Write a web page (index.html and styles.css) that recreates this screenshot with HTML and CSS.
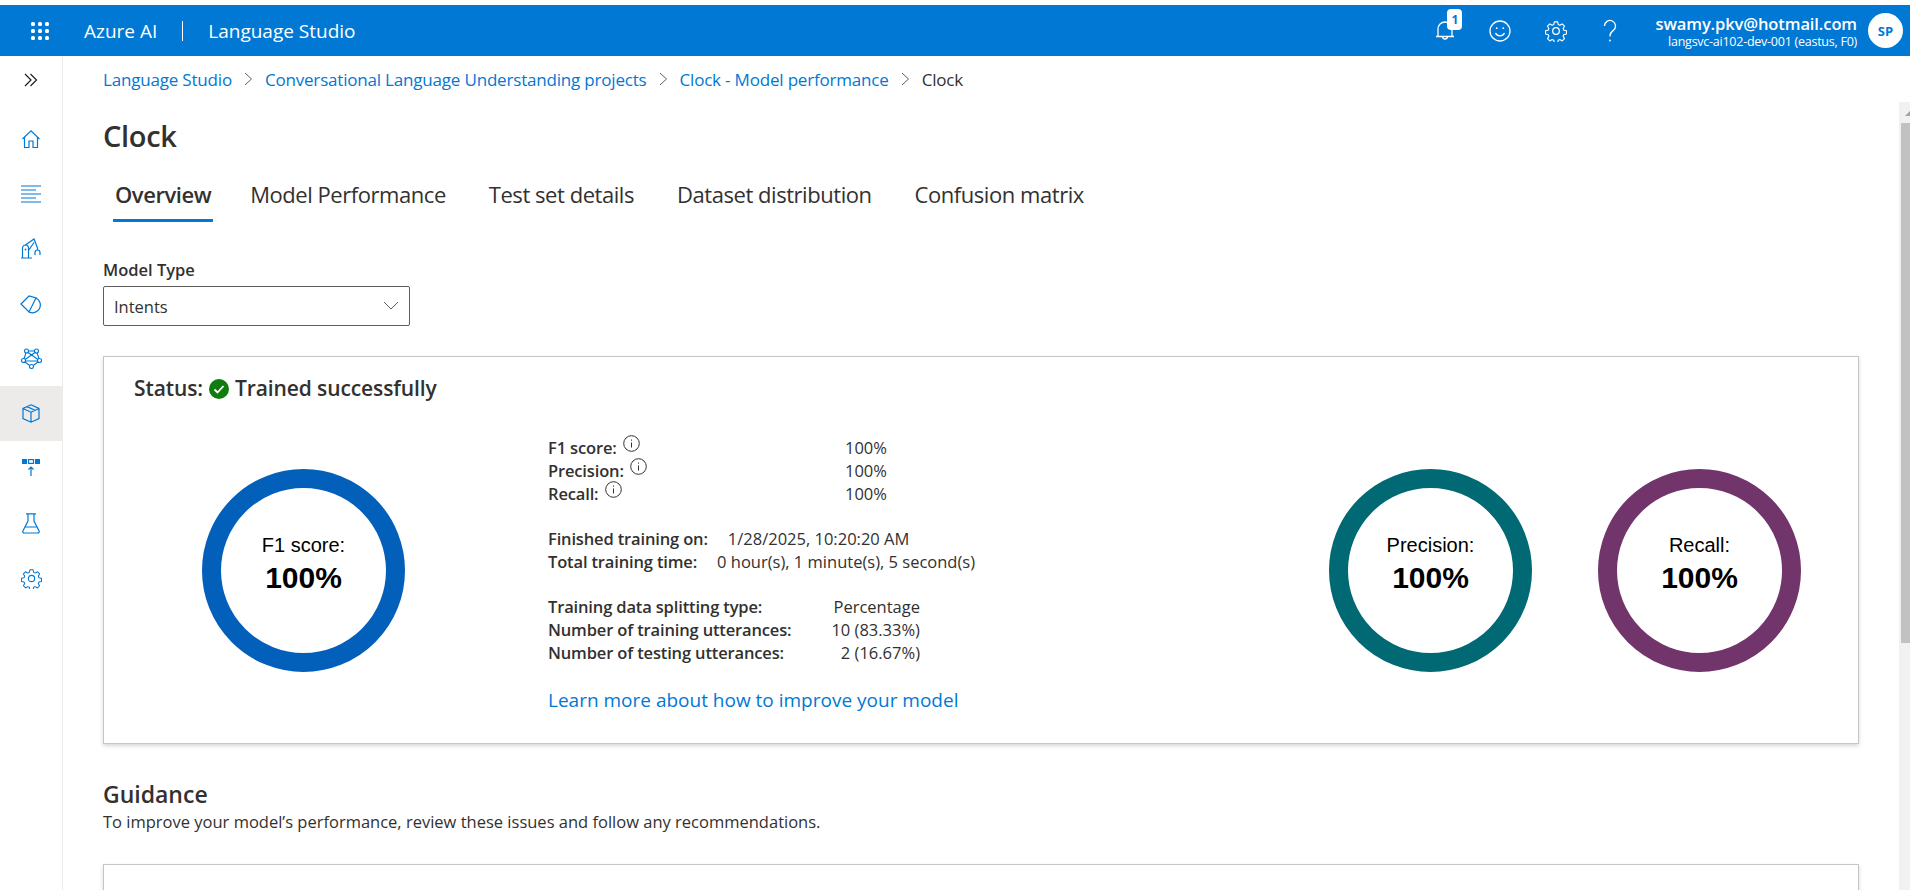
FILE: index.html
```html
<!DOCTYPE html>
<html lang="en">
<head>
    <meta charset="UTF-8">
    <title>Language Studio</title>
    <link rel="stylesheet" href="styles.css">
</head>
<body>
    <header class="topbar">
        <svg class="waffle" width="20" height="20" viewBox="0 0 20 20" fill="#fff">
            <rect x="1" y="1" width="4" height="4" rx="1.5"/><rect x="8" y="1" width="4" height="4" rx="1.5"/><rect x="15" y="1" width="4" height="4" rx="1.5"/>
            <rect x="1" y="8" width="4" height="4" rx="1.5"/><rect x="8" y="8" width="4" height="4" rx="1.5"/><rect x="15" y="8" width="4" height="4" rx="1.5"/>
            <rect x="1" y="15" width="4" height="4" rx="1.5"/><rect x="8" y="15" width="4" height="4" rx="1.5"/><rect x="15" y="15" width="4" height="4" rx="1.5"/>
        </svg>
        <span class="brand">Azure AI</span>
        <span class="brandSep"></span>
        <span class="brand">Language Studio</span>

        <div class="topIcons">
            <div class="bell">
                <svg width="22" height="22" viewBox="0 0 22 22" fill="none" stroke="#fff" stroke-width="1.3">
                    <path d="M4 16.5V9a7 7 0 0 1 14 0v7.5M2 16.5h18M8.5 16.5a2.5 2.5 0 0 0 5 0"/>
                </svg>
                <span class="badge">1</span>
            </div>
            <svg class="smile" width="22" height="22" viewBox="0 0 22 22" fill="none" stroke="#fff" stroke-width="1.3">
                <circle cx="11" cy="11" r="10"/>
                <path d="M6.5 13a5 5 0 0 0 9 0"/>
                <circle cx="7.7" cy="8.2" r=".9" fill="#fff" stroke="none"/>
                <circle cx="14.3" cy="8.2" r=".9" fill="#fff" stroke="none"/>
            </svg>
            <svg class="cog" width="22" height="22" viewBox="0 0 24 24" fill="none" stroke="#fff" stroke-width="1.4" stroke-linejoin="round">
                <circle cx="12" cy="12" r="3.6"/>
                <path d="M10 1h4l.7 3.2 2 .9 2.8-1.700 2.800 2.800-1.700 2.800.9 2 3.200.7v4l-3.200.7-.9 2 1.700 2.800-2.800 2.800-2.800-1.700-2 .9-.7 3.200h-4l-.7-3.200-2-.9-2.800 1.700-2.800-2.800 1.700-2.800-.9-2-3.200-.7v-4l3.200-.7.9-2-1.700-2.800 2.800-2.800 2.800 1.700 2-.9z" transform="translate(1.2 1.2) scale(.9)"/>
            </svg>
            <svg class="help" width="16" height="24" viewBox="0 0 16 24" fill="none" stroke="#fff" stroke-width="1.3">
                <path d="M2.500 7a5.500 5.500 0 1 1 9 4.200c-1.800 1.500-3.500 2.600-3.500 5.300v1"/>
                <circle cx="8" cy="21.500" r=".9" fill="#fff" stroke="none"/>
            </svg>
        </div>

        <div class="account">
            <div class="accountMail">swamy.pkv@hotmail.com</div>
            <div class="accountRes">langsvc-ai102-dev-001 (eastus, F0)</div>
        </div>
        <div class="avatar">SP</div>
    </header>

    <div class="main">
        <nav class="sidebar">
            <div class="toggle">
                <svg width="14" height="14" viewBox="0 0 14 14" fill="none" stroke="#201f1e" stroke-width="1.200">
                    <path d="M1 1l6 6-6 6M6.500 1l6 6-6 6"/>
                </svg>
            </div>
            <div class="navItem">
                <svg width="20" height="20" viewBox="0 0 20 20" fill="none" stroke="#0078d4" stroke-width="1.200">
                    <path d="M1.500 10L10 1.800 18.500 10M3.500 8.500V18.500h4.500v-6.500h4v6.500h4.500V8.500"/>
                </svg>
            </div>
            <div class="navItem">
                <svg width="20" height="20" viewBox="0 0 20 20" fill="none" stroke="#0078d4" stroke-width="1.100">
                    <path d="M0 2h20M0 6h15M0 10h20M0 14h15M0 18h20"/>
                </svg>
            </div>
            <div class="navItem">
                <svg width="21" height="21" viewBox="0 0 21 21" fill="none" stroke="#0078d4" stroke-width="1.200">
                    <path d="M0 20h11M1.500 20V10a3 3 0 0 1 6 0v10M4 7.200L13 1l3.500 9M7.500 12.500L13 4.500M16.500 10v2M14 17v-2.500a2.500 2.500 0 0 1 5 0V17"/>
                    <circle cx="4.500" cy="11.500" r=".9" fill="#0078d4" stroke="none"/>
                </svg>
            </div>
            <div class="navItem">
                <svg width="22" height="20" viewBox="0 0 22 20" fill="none" stroke="#0078d4" stroke-width="1.200">
                    <path d="M1 10L9 2l7 2-7 14z"/>
                    <path d="M16 4a7.500 7.500 0 0 1-7 14"/>
                </svg>
            </div>
            <div class="navItem">
                <svg width="21" height="21" viewBox="0 0 21 21" fill="none" stroke="#0078d4" stroke-width="1.100">
                    <circle cx="5.500" cy="3" r="2"/><circle cx="15.500" cy="3" r="2"/><circle cx="2.500" cy="12.500" r="2"/><circle cx="18.500" cy="12.500" r="2"/><circle cx="10.500" cy="18.500" r="2"/>
                    <path d="M7.500 3h6M5 5L3 10.500M16 5l2 5.500M4.500 13h12M4 14l4.700 3.500M17 14l-4.700 3.500M7 4.500l10 7M14 4.500l-10 7"/>
                </svg>
            </div>
            <div class="navItem active">
                <svg width="18" height="19" viewBox="0 0 18 19" fill="none" stroke="#0078d4" stroke-width="1.200">
                    <path d="M9 .8l8 3.700v10l-8 3.700-8-3.700v-10zM1 4.500l8 3.700 8-3.700M9 8.200v10M5 2.600l8 3.700"/>
                </svg>
            </div>
            <div class="navItem">
                <svg width="18" height="20" viewBox="0 0 18 20" fill="none" stroke="#0078d4" stroke-width="1.200">
                    <rect x="0" y="0" width="5" height="5" fill="#0078d4" stroke="none"/>
                    <rect x="6.500" y="0.600" width="5" height="3.800"/>
                    <rect x="13" y="0" width="5" height="5" fill="#0078d4" stroke="none"/>
                    <path d="M9 17V8M6.500 10.500L9 8l2.500 2.500"/>
                </svg>
            </div>
            <div class="navItem">
                <svg width="18" height="21" viewBox="0 0 18 21" fill="none" stroke="#0078d4" stroke-width="1.200">
                    <path d="M4 .8h10M6 .8v7.200L.9 18a1.400 1.400 0 0 0 1.200 2h13.800a1.400 1.400 0 0 0 1.200-2L12 8V.8M3.500 14h11"/>
                </svg>
            </div>
            <div class="navItem">
                <svg width="21" height="21" viewBox="0 0 24 24" fill="none" stroke="#0078d4" stroke-width="1.300" stroke-linejoin="round">
                    <circle cx="12" cy="12" r="3.600"/>
                    <path d="M10 1h4l.7 3.200 2 .9 2.800-1.700 2.800 2.800-1.700 2.800.9 2 3.200.7v4l-3.200.7-.9 2 1.700 2.800-2.800 2.800-2.800-1.700-2 .9-.7 3.200h-4l-.7-3.200-2-.9-2.800 1.700-2.800-2.800 1.700-2.800-.9-2-3.200-.7v-4l3.200-.7.9-2-1.700-2.800 2.800-2.800 2.800 1.700 2-.9z" transform="translate(1.200 1.200) scale(.9)"/>
                </svg>
            </div>
        </nav>

        <div class="content">
            <div class="crumbs">
                <a class="crumb">Language Studio</a>
                <svg class="crumbSep" width="9" height="14" viewBox="0 0 9 14" fill="none" stroke="#605e5c"><path d="M1 1l6.500 6-6.500 6"/></svg>
                <a class="crumb">Conversational Language Understanding projects</a>
                <svg class="crumbSep" width="9" height="14" viewBox="0 0 9 14" fill="none" stroke="#605e5c"><path d="M1 1l6.500 6-6.500 6"/></svg>
                <a class="crumb">Clock - Model performance</a>
                <svg class="crumbSep" width="9" height="14" viewBox="0 0 9 14" fill="none" stroke="#605e5c"><path d="M1 1l6.500 6-6.500 6"/></svg>
                <span class="crumbLast">Clock</span>
            </div>

            <h1 class="title">Clock</h1>

            <div class="tabs">
                <div class="tab tabOn">Overview</div>
                <div class="tab">Model Performance</div>
                <div class="tab">Test set details</div>
                <div class="tab">Dataset distribution</div>
                <div class="tab">Confusion matrix</div>
            </div>

            <div class="fieldLabel">Model Type</div>
            <div class="dropdown">
                <span>Intents</span>
                <svg width="16" height="10" viewBox="0 0 16 10" fill="none" stroke="#605e5c"><path d="M1 1l7 7 7-7"/></svg>
            </div>

            <section class="card">
                <div class="status">
                    <span>Status:</span>
                    <svg width="20" height="20" viewBox="0 0 20 20">
                        <circle cx="10" cy="10" r="10" fill="#107c10"/>
                        <path d="M5.500 10.500l3 3 6-6.500" fill="none" stroke="#fff" stroke-width="1.800"/>
                    </svg>
                    <span>Trained successfully</span>
                </div>
                <div class="cardBody">
                    <div class="ring ringBlue">
                        <div class="ringLabel">F1 score:</div>
                        <div class="ringValue">100%</div>
                    </div>

                    <div class="details">
                        <div class="group scores">
                            <div class="scoreRow">
                                <span class="key">F1 score: <svg class="info" width="17" height="17" viewBox="0 0 17 17" fill="none" stroke="#323130"><circle cx="8.500" cy="8.500" r="7.800"/><path d="M8.500 7.500v5M8.500 4.500v1.200"/></svg></span>
                                <span>100%</span>
                            </div>
                            <div class="scoreRow">
                                <span class="key">Precision: <svg class="info" width="17" height="17" viewBox="0 0 17 17" fill="none" stroke="#323130"><circle cx="8.500" cy="8.500" r="7.800"/><path d="M8.500 7.500v5M8.500 4.500v1.200"/></svg></span>
                                <span>100%</span>
                            </div>
                            <div class="scoreRow">
                                <span class="key">Recall: <svg class="info" width="17" height="17" viewBox="0 0 17 17" fill="none" stroke="#323130"><circle cx="8.500" cy="8.500" r="7.800"/><path d="M8.500 7.500v5M8.500 4.500v1.200"/></svg></span>
                                <span>100%</span>
                            </div>
                        </div>

                        <div class="group">
                            <div class="timeRow"><span class="key">Finished training on:</span><span>1/28/2025, 10:20:20 AM</span></div>
                            <div class="timeRow"><span class="key">Total training time:</span><span>0 hour(s), 1 minute(s), 5 second(s)</span></div>
                        </div>

                        <div class="group">
                            <div class="splitRow"><span class="key">Training data splitting type:</span><span>Percentage</span></div>
                            <div class="splitRow"><span class="key">Number of training utterances:</span><span>10 (83.33%)</span></div>
                            <div class="splitRow"><span class="key">Number of testing utterances:</span><span>2 (16.67%)</span></div>
                        </div>

                        <a class="learnMore">Learn more about how to improve your model</a>
                    </div>

                    <div class="rings">
                        <div class="ring ringTeal">
                            <div class="ringLabel">Precision:</div>
                            <div class="ringValue">100%</div>
                        </div>
                        <div class="ring ringPurple">
                            <div class="ringLabel">Recall:</div>
                            <div class="ringValue">100%</div>
                        </div>
                    </div>
                </div>
            </section>

            <h2 class="guidance">Guidance</h2>
            <p class="guidanceText">To improve your model’s performance, review these issues and follow any recommendations.</p>
            <section class="card cardEmpty"></section>
        </div>

        <div class="scrollbar">
            <div class="scrollUp"></div>
            <div class="scrollThumb"></div>
        </div>
    </div>
</body>
</html>
```

FILE: styles.css
```css
* {
    box-sizing: border-box;
}
html, body {
    height: 100%;
}
body {
    margin: 0;
    padding-top: 5px;
    overflow: hidden;
    background: #fff;
    color: #323130;
    font-family: "Open Sans", "Noto Sans", sans-serif;
    font-size: 16px;
    display: flex;
    flex-direction: column;
}
a {
    color: #0078d4;
}

.topbar {
    height: 51px;
    flex: none;
    background: #0078d4;
    color: #fff;
    display: flex;
    align-items: center;
    padding-left: 30px;
}
.waffle {
    margin-right: 34px;
}
.brand {
    font-size: 19px;
}
.brandSep {
    width: 1px;
    height: 20px;
    background: #fff;
    margin: 0 25px;
}
.topIcons {
    margin-left: auto;
    display: flex;
    align-items: center;
    margin-right: 37px;
}
.bell {
    position: relative;
    width: 22px;
    height: 22px;
    margin-right: 33px;
}
.bell svg {
    display: block;
}
.badge {
    position: absolute;
    left: 13px;
    top: -11px;
    width: 15px;
    height: 21px;
    border-radius: 4px;
    background: #fff;
    color: #0078d4;
    font-size: 12px;
    font-weight: 700;
    text-align: center;
    line-height: 21px;
}
.smile {
    margin-right: 34px;
}
.cog {
    margin-right: 35px;
}
.account {
    text-align: right;
    margin-right: 11px;
    padding-top: 2px;
}
.accountMail {
    font-size: 16.5px;
    font-weight: 600;
    line-height: 20px;
    letter-spacing: -0.1px;
}
.accountRes {
    font-size: 12.5px;
    line-height: 16px;
    letter-spacing: -0.25px;
}
.avatar {
    width: 35px;
    height: 35px;
    margin-right: 7px;
    border-radius: 50%;
    background: #fff;
    color: #0078d4;
    font-size: 13px;
    font-weight: 700;
    display: flex;
    align-items: center;
    justify-content: center;
}

.main {
    flex: 1;
    min-height: 0;
    display: flex;
}
.sidebar {
    width: 63px;
    flex: none;
    border-right: 1px solid #edebe9;
}
.toggle {
    height: 48px;
    margin-bottom: 7px;
    display: flex;
    align-items: center;
    justify-content: center;
}
.navItem {
    height: 55px;
    display: flex;
    align-items: center;
    justify-content: center;
}
.active {
    background: #edebe9;
}

.content {
    flex: 1;
    min-width: 0;
    padding: 0 40px;
    overflow: hidden;
}
.crumbs {
    height: 46px;
    display: flex;
    align-items: center;
    font-size: 17px;
    letter-spacing: -0.19px;
}
.crumbSep {
    margin: 0 12px;
}
.crumbLast {
    color: #323130;
}
.title {
    margin: 14px 0 0;
    font-size: 29px;
    line-height: 40px;
    font-weight: 600;
    letter-spacing: -0.3px;
}
.tabs {
    display: flex;
    margin-top: 20px;
    padding-left: 10px;
    gap: 39px;
    height: 46px;
}
.tab {
    font-size: 22px;
    line-height: 36px;
    padding: 0 2px;
    letter-spacing: -0.45px;
}
.tabOn {
    font-weight: 600;
    border-bottom: 3px solid #0078d4;
    height: 46px;
    margin-right: -4px;
}
.fieldLabel {
    margin-top: 37px;
    font-size: 16.5px;
    font-weight: 600;
    line-height: 22px;
}
.dropdown {
    width: 307px;
    height: 40px;
    margin-top: 5px;
    padding: 0 10px;
    border: 1px solid #605e5c;
    border-radius: 2px;
    font-size: 16.5px;
    display: flex;
    align-items: center;
    justify-content: space-between;
}

.card {
    margin-top: 30px;
    height: 388px;
    border: 1px solid #c8c6c4;
    box-shadow: 0 2px 4px rgba(0, 0, 0, 0.16);
    background: #fff;
}
.cardEmpty {
    margin-top: 30px;
}
.status {
    margin: 18px 0 0 30px;
    display: flex;
    align-items: center;
    gap: 6px;
    font-size: 21px;
    font-weight: 600;
    line-height: 27px;
    letter-spacing: -0.1px;
}
.cardBody {
    display: flex;
    padding: 0 57px 0 98px;
    margin-top: 34px;
}
.ring {
    width: 203px;
    height: 203px;
    flex: none;
    margin-top: 33px;
    border-radius: 50%;
    border: 19px solid;
    color: #000;
    font-family: "Liberation Sans", Arial, sans-serif;
    text-align: center;
    padding-top: 46px;
}
.ringBlue {
    border-color: #0260bb;
}
.ringTeal {
    border-color: #006974;
}
.ringPurple {
    border-color: #71356b;
}
.ringLabel {
    font-size: 20px;
    line-height: 22px;
}
.ringValue {
    font-size: 30px;
    font-weight: 700;
    line-height: 40px;
    margin-top: 2px;
}
.details {
    margin-left: 143px;
    font-size: 16.5px;
    line-height: 23px;
}
.group {
    margin-bottom: 22px;
}
.key {
    font-weight: 600;
    letter-spacing: -0.15px;
}
.scoreRow {
    display: grid;
    grid-template-columns: 297px auto;
}
.info {
    position: relative;
    top: -6px;
    margin-left: 2px;
    vertical-align: middle;
}
.timeRow {
    display: flex;
    gap: 20px;
}
.splitRow {
    width: 372px;
    display: flex;
    justify-content: space-between;
}
.learnMore {
    display: block;
    font-size: 19px;
    line-height: 24px;
    margin-top: 23.5px;
    color: #0078d4;
}
.rings {
    margin-left: auto;
    display: flex;
    gap: 66px;
}

.guidance {
    margin: 34px 0 0;
    font-size: 23px;
    line-height: 32px;
    font-weight: 600;
}
.guidanceText {
    margin: 0;
    font-size: 16.5px;
    line-height: 24px;
}

.scrollbar {
    width: 11px;
    flex: none;
    margin-top: 46px;
    padding-left: 2px;
    background: #f1f1f1;
    overflow: hidden;
}
.scrollUp {
    margin: 9px 0 0 4px;
    width: 0;
    height: 0;
    border-left: 5px solid transparent;
    border-right: 5px solid transparent;
    border-bottom: 5px solid #a3a3a3;
}
.scrollThumb {
    width: 9px;
    height: 520px;
    margin-top: 7px;
    background: #c1c1c1;
}
```
